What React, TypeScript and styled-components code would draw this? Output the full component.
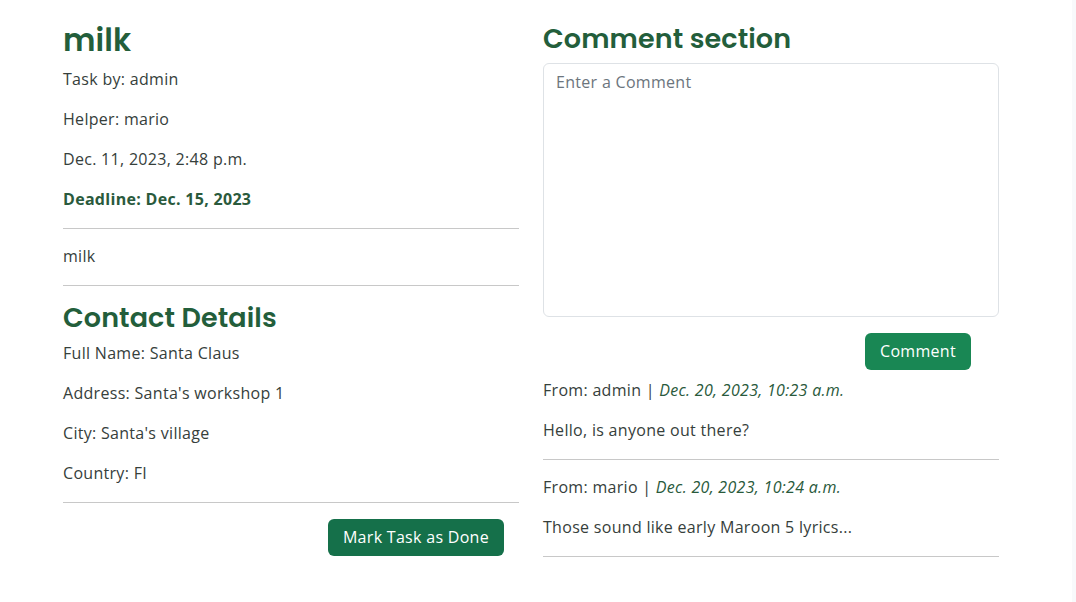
import React from "react";
import styled, { createGlobalStyle } from "styled-components";

const Global = createGlobalStyle`
  html, body { margin: 0; padding: 0; background: #f8f9fb; }
  body {
    font-family: "Open Sans", "Liberation Sans", sans-serif;
    color: #36403b;
    font-size: 16px;
    letter-spacing: 0.3px;
  }
  * { box-sizing: border-box; }
`;

const Page = styled.div`
  width: 1072px;
  min-height: 602px;
  background: #ffffff;
`;

const Container = styled.main`
  width: 960px;
  margin: 0 0 0 51px;
  display: grid;
  grid-template-columns: 1fr 1fr;
`;

const Column = styled.section`
  padding: 0 12px;
  display: flex;
  flex-direction: column;
`;

const Title = styled.h1<{ $size: number; $top: number; $bottom: number }>`
  font-family: "Poppins", "Inter", "Noto Sans", sans-serif;
  font-weight: 600;
  font-size: ${(p) => p.$size}px;
  line-height: 1.2;
  color: #235e3b;
  margin: ${(p) => p.$top}px 0 ${(p) => p.$bottom}px;
  letter-spacing: 0.1px;
`;

const Line = styled.p<{ $bold?: boolean }>`
  margin: 0 0 16px;
  line-height: 24px;
  font-weight: ${(p) => (p.$bold ? 700 : 400)};
  color: ${(p) => (p.$bold ? "#2a5a3c" : "#36403b")};
`;

const Rule = styled.hr`
  border: 0;
  border-top: 1px solid #c8c8c8;
  margin: 1px 0 15px;
  width: 100%;
`;

const Actions = styled.div<{ $pad: number; $top?: number }>`
  display: flex;
  justify-content: flex-end;
  padding-right: ${(p) => p.$pad}px;
  margin-top: ${(p) => p.$top ?? 0}px;
`;

const Button = styled.button<{ $dark?: boolean }>`
  font-family: inherit;
  font-size: 16px;
  line-height: 24px;
  letter-spacing: 0.3px;
  color: #fff;
  background: ${(p) => (p.$dark ? "#15704a" : "#198754")};
  border: 0;
  border-radius: 6px;
  padding: 6px 15px 7px;
`;

const TextArea = styled.textarea`
  width: 100%;
  height: 254px;
  border: 1px solid #dee2e6;
  border-radius: 6px;
  padding: 6px 12px;
  font-family: inherit;
  font-size: 16px;
  line-height: 24px;
  letter-spacing: 0.3px;
  color: #36403b;
  resize: none;
  margin: 0 0 16px;
  &::placeholder { color: #6c757d; }
`;

const CommentList = styled.div`
  display: flex;
  flex-direction: column;
  margin-top: 8px;
`;

const Meta = styled.p`
  margin: 0 0 16px;
  line-height: 24px;
`;

const Stamp = styled.em`
  color: #2a5a3c;
`;

const Comment: React.FC<{ who: string; when: string; text: string }> = ({ who, when, text }) => (
  <>
    <Meta>
      From: {who} | <Stamp>{when}</Stamp>
    </Meta>
    <Line>{text}</Line>
    <Rule />
  </>
);

export default function App() {
  return (
    <Page>
      <Global />
      <Container>
        <Column>
          <Title $size={31} $top={22} $bottom={8}>milk</Title>
          <Line>Task by: admin</Line>
          <Line>Helper: mario</Line>
          <Line>Dec. 11, 2023, 2:48 p.m.</Line>
          <Line $bold>Deadline: Dec. 15, 2023</Line>
          <Rule />
          <Line>milk</Line>
          <Rule />
          <Title $size={27} $top={1} $bottom={6}>Contact Details</Title>
          <Line>Full Name: Santa Claus</Line>
          <Line>Address: Santa's workshop 1</Line>
          <Line>City: Santa's village</Line>
          <Line>Country: FI</Line>
          <Rule />
          <Actions $pad={15} $top={1}>
            <Button $dark>Mark Task as Done</Button>
          </Actions>
        </Column>
        <Column>
          <Title $size={27} $top={23} $bottom={8}>Comment section</Title>
          <TextArea placeholder="Enter a Comment" />
          <Actions $pad={28}>
            <Button>Comment</Button>
          </Actions>
          <CommentList>
            <Comment who="admin" when="Dec. 20, 2023, 10:23 a.m." text="Hello, is anyone out there?" />
            <Comment who="mario" when="Dec. 20, 2023, 10:24 a.m." text="Those sound like early Maroon 5 lyrics..." />
          </CommentList>
        </Column>
      </Container>
    </Page>
  );
}
